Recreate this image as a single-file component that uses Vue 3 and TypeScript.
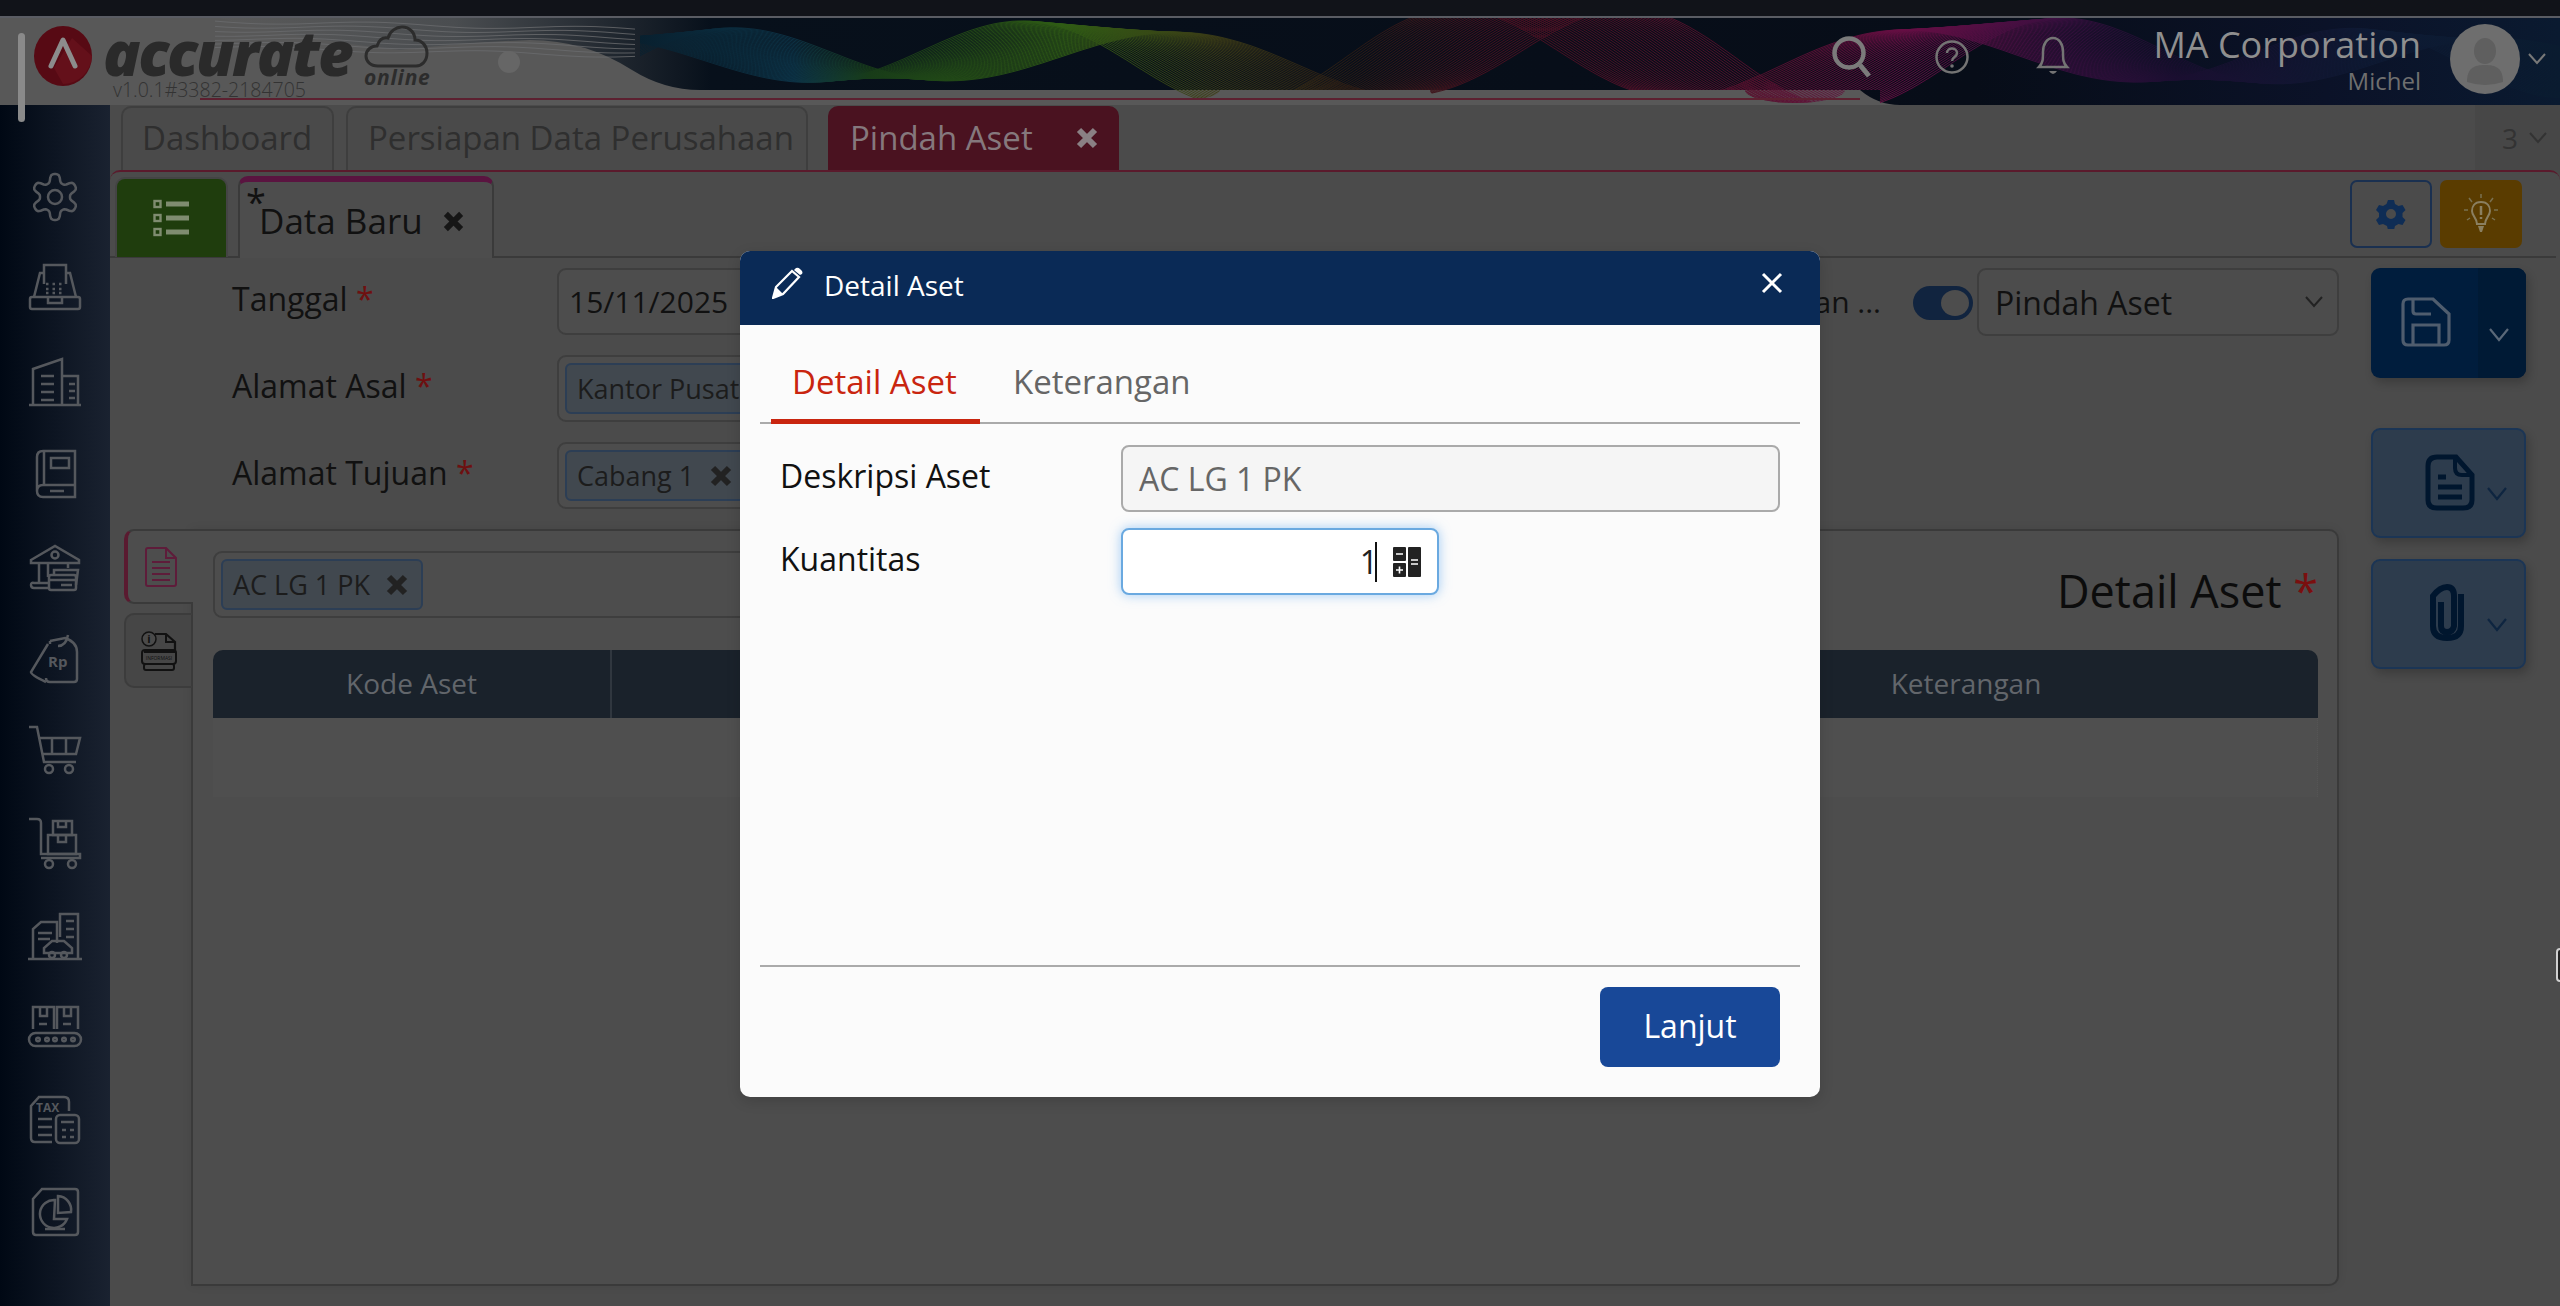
<script setup lang="ts">
import { computed } from 'vue'

const ribbonLines = computed(() => {
  const out: string[] = []
  const n = 46
  for (let i = 0; i < n; i++) {
    const t = i / (n - 1)
    let d = ''
    for (let x = 640; x <= 2560; x += 6) {
      const env = 36 + 12 * Math.sin(x / 230 + t * 2.2)
      const y = 40 + env * Math.sin((x * 2 * Math.PI) / 440 + 0.4 + t * 2.3) + 5 * Math.sin(x / 95 + t * 2.5)
      d += (d ? 'L' : 'M') + x + ' ' + y.toFixed(1)
    }
    out.push(d)
  }
  return out
})

const greyLines = computed(() => {
  const out: string[] = []
  for (let i = 0; i < 7; i++) {
    let d = ''
    for (let x = 215; x <= 640; x += 10) {
      const y = 3 + i * 4.4 + (x - 215) * 0.02 + 2 * Math.sin(x / 34 + i * 0.5)
      d += (d ? 'L' : 'M') + x + ' ' + y.toFixed(1)
    }
    out.push(d)
  }
  return out
})

const gearPath = computed(() => {
  let d = ''
  for (let a = 0; a <= 360; a += 4) {
    const th = (a * Math.PI) / 180
    const c = Math.cos(6 * (th + Math.PI / 2))
    const r = 19 + (4 * Math.tanh(1.8 * c)) / Math.tanh(1.8)
    d += (d ? 'L' : 'M') + (27 + r * Math.cos(th)).toFixed(2) + ' ' + (27 + r * Math.sin(th)).toFixed(2)
  }
  return d + 'Z'
})
</script>

<template>
  <div class="page">
    <div class="strip"></div>

    <header class="header">
      <svg class="art" viewBox="0 0 2560 87" preserveAspectRatio="none">
        <defs>
          <linearGradient id="baseG" gradientUnits="userSpaceOnUse" x1="220" y1="0" x2="2560" y2="0">
            <stop offset="0" stop-color="#5a5a5a" />
            <stop offset="0.1" stop-color="#4a4d50" />
            <stop offset="0.21" stop-color="#07101b" />
            <stop offset="0.75" stop-color="#070d18" />
            <stop offset="0.9" stop-color="#0b1228" />
            <stop offset="1" stop-color="#0a1a30" />
          </linearGradient>
          <linearGradient id="ribG" gradientUnits="userSpaceOnUse" x1="640" y1="0" x2="2560" y2="0">
            <stop offset="0" stop-color="#08202f" />
            <stop offset="0.08" stop-color="#0c3448" />
            <stop offset="0.12" stop-color="#183c18" />
            <stop offset="0.22" stop-color="#2f5c14" />
            <stop offset="0.3" stop-color="#3c3c16" />
            <stop offset="0.37" stop-color="#2c1c14" />
            <stop offset="0.44" stop-color="#4a1020" />
            <stop offset="0.58" stop-color="#58102e" />
            <stop offset="0.66" stop-color="#660e44" />
            <stop offset="0.74" stop-color="#3a0f40" />
            <stop offset="0.8" stop-color="#1a0e30" />
            <stop offset="0.9" stop-color="#0e1a34" />
            <stop offset="1" stop-color="#0a1c30" />
          </linearGradient>
          <clipPath id="ribClip">
            <rect x="640" y="0" width="1260" height="72" />
            <rect x="1880" y="0" width="680" height="87" />
            <ellipse cx="1150" cy="72" rx="70" ry="13" />
            <ellipse cx="1490" cy="72" rx="60" ry="15" />
            <ellipse cx="1795" cy="72" rx="50" ry="13" />
          </clipPath>
        </defs>
        <path fill="url(#baseG)" d="M220 0H2560V87H1900Q1878 87 1860 72H700Q664 72 632 52Q585 22 530 22Q470 24 400 32Q300 22 220 0Z" />
        <path v-for="(d, i) in greyLines" :key="'g' + i" :d="d" fill="none" stroke="#6a6c6e" stroke-width="1" opacity="0.8" />
        <g clip-path="url(#ribClip)">
          <path v-for="(d, i) in ribbonLines" :key="i" :d="d" fill="none" stroke="url(#ribG)" stroke-width="0.9" />
        </g>
        <path d="M200 81H1860" stroke="#5c2030" stroke-width="2" />
      </svg>

      <div class="scroll-thumb"></div>

      <div class="logo">
        <svg class="logo-mark" viewBox="0 0 58 60">
          <ellipse cx="29" cy="30" rx="29" ry="30" fill="#570a14" />
          <path d="M29 58a29 30 0 0 0 29-28L38 12 20 42Z" fill="#64101a" />
          <path d="M17 40 29 14 41 40" fill="none" stroke="#8c8c8c" stroke-width="5" stroke-linecap="round" stroke-linejoin="round" />
        </svg>
        <div class="logo-words">
          <span class="logo-name">accurate</span>
          <span class="logo-ver">v1.0.1#3382-2184705</span>
        </div>
        <div class="logo-cloud">
          <svg viewBox="0 0 66 44" width="66" height="44">
            <path d="M14 41C6 41 2 36 2 31 2 25 7 21 13 21 15 15 19 12 24 13 26 6 32 2 38 2 46 2 51 8 51 15 58 15 63 21 63 28 63 36 58 41 52 41Z" fill="none" stroke="#2c2c2c" stroke-width="3" />
          </svg>
          <span class="logo-online">online</span>
        </div>
        <div class="logo-dot"></div>
      </div>

      <div class="head-right">
        <svg class="hicon search" viewBox="0 0 40 44" width="40" height="44">
          <circle cx="17" cy="17" r="14.5" fill="none" stroke="#7b7b7b" stroke-width="4.5" />
          <path d="M28 29 37 40" stroke="#7b7b7b" stroke-width="5" />
        </svg>
        <svg class="hicon help" viewBox="0 0 36 36" width="36" height="36">
          <circle cx="18" cy="18" r="15.5" fill="none" stroke="#747474" stroke-width="2.5" />
          <path d="M13 14C13 8 23 8 23 14 23 18 18 18 18 22" fill="none" stroke="#747474" stroke-width="2.5" />
          <circle cx="18" cy="27" r="1.8" fill="#747474" />
        </svg>
        <svg class="hicon bell" viewBox="0 0 34 42" width="34" height="42">
          <path d="M3 32C7 28 7 24 7 17 7 9 11 3 17 3 23 3 27 9 27 17 27 24 27 28 31 32Z" fill="none" stroke="#747474" stroke-width="2.5" />
          <path d="M13 36Q17 42 21 36Z" fill="#747474" />
        </svg>
        <div class="who">
          <div class="corp">MA Corporation</div>
          <div class="user">Michel</div>
        </div>
        <svg class="avatar" viewBox="0 0 70 70" width="70" height="70">
          <circle cx="35" cy="35" r="35" fill="#6e6e6e" />
          <ellipse cx="35" cy="27" rx="11" ry="13" fill="#5f5f5f" />
          <path d="M17 58C17 44 24 41 35 41S53 44 53 58Q35 64 17 58Z" fill="#5f5f5f" />
        </svg>
        <svg class="chev head-chev" viewBox="0 0 18 12" width="18" height="12"><path d="M1 1 9 10 17 1" fill="none" stroke="#787878" stroke-width="2" /></svg>
      </div>
    </header>

    <div class="body">
      <nav class="side">
        <div class="side-item">
          <svg viewBox="0 0 54 54" width="54" height="54"><path :d="gearPath" /><circle cx="27" cy="27" r="7" /></svg>
        </div>
        <div class="side-item">
          <svg viewBox="0 0 54 54" width="54" height="54">
            <path d="M16 22V3H38V22" /><path d="M16 11H12L6 35M38 11H42L48 35" /><rect x="2" y="35" width="50" height="12" rx="2" /><path d="M20 35V41H34V35" />
            <path d="M18 22H36M18 27H36M18 31H36" stroke-dasharray="2.5 4" />
          </svg>
        </div>
        <div class="side-item">
          <svg viewBox="0 0 54 54" width="54" height="54">
            <path d="M1 50H53" /><path d="M5 50V14L34 4V50" /><path d="M34 21H50V50" /><path d="M13 21H26M13 29H26M13 37H26M13 45H26M41 29H47M41 36H47M41 43H47" />
          </svg>
        </div>
        <div class="side-item">
          <svg viewBox="0 0 54 54" width="54" height="54">
            <path d="M9 44V10Q9 4 15 4H47V50H15Q9 50 9 44T15 38H47" /><path d="M16 4V38" /><rect x="23" y="11" width="18" height="10" /><path d="M22 44H36" />
          </svg>
        </div>
        <div class="side-item">
          <svg viewBox="0 0 54 54" width="54" height="54">
            <path d="M3 21 27 7 51 21V24H3Z" /><circle cx="27" cy="16" r="3.5" /><path d="M11 24V45M20 24V38M40 24V29" /><path d="M20 49H6Q3 49 3 46T6 44H20" />
            <rect x="21" y="36" width="27" height="15" rx="2" /><path d="M26 36V31H50L48 46" /><path d="M21 41H48M33 46H44" />
          </svg>
        </div>
        <div class="side-item">
          <svg viewBox="0 0 54 54" width="54" height="54">
            <path d="M22 9 37 6Q49 10 49 20V47Q49 50 46 50H22Q18 50 18 46" /><path d="M20 12 3 40Q3 43 18 50" /><path d="M22 9V12" /><path d="M30 14Q38 14 40 3" />
            <text x="20" y="35" class="ic-text">Rp</text>
          </svg>
        </div>
        <div class="side-item">
          <svg viewBox="0 0 54 54" width="54" height="54">
            <path d="M1 3H9L16 38H48" /><path d="M11 14H52L48 30H14" /><path d="M24 14V30M38 14V30" /><circle cx="21" cy="45" r="4" /><circle cx="41" cy="45" r="4" />
          </svg>
        </div>
        <div class="side-item">
          <svg viewBox="0 0 54 54" width="54" height="54">
            <path d="M1 3H9Q13 3 13 7V38H52V42H13" /><circle cx="21" cy="48" r="4" /><circle cx="44" cy="48" r="4" />
            <rect x="20" y="19" width="28" height="19" /><rect x="25" y="5" width="19" height="14" /><path d="M30 5V11H38V5M30 19V26H38V19" />
          </svg>
        </div>
        <div class="side-item">
          <svg viewBox="0 0 54 54" width="54" height="54">
            <path d="M0 50H54" /><path d="M5 50V20L13 13H29V34" /><path d="M32 28V5H50V50" /><path d="M10 24H24M10 30H22M38 12H46M38 20H46M38 28H46" />
            <path d="M16 44V39L24 32H36L44 39V44Z" /><circle cx="24" cy="46" r="3" /><circle cx="36" cy="46" r="3" />
          </svg>
        </div>
        <div class="side-item">
          <svg viewBox="0 0 54 54" width="54" height="54">
            <path d="M5 28V6H26V28M29 28V6H50V28" /><path d="M12 6V15H19V6M36 6V15H43V6M11 23H19M35 23H43" />
            <rect x="1" y="32" width="52" height="13" rx="6.5" /><circle cx="10" cy="38.5" r="1.8" /><circle cx="19" cy="38.5" r="1.8" /><circle cx="27" cy="38.5" r="1.8" /><circle cx="36" cy="38.5" r="1.8" /><circle cx="45" cy="38.5" r="1.8" />
          </svg>
        </div>
        <div class="side-item">
          <svg viewBox="0 0 54 54" width="54" height="54">
            <path d="M24 49H7Q3 49 3 45V13L11 4H36Q41 4 41 9V18" /><path d="M10 26H24M10 34H24M10 42H24" />
            <rect x="28" y="22" width="23" height="28" rx="4" /><path d="M33 29H46M34 37H38M42 37H46M34 44H38M42 44H46" />
            <text x="8" y="19" class="ic-tax">TAX</text>
          </svg>
        </div>
        <div class="side-item">
          <svg viewBox="0 0 54 54" width="54" height="54">
            <path d="M14 4H47Q50 4 50 7V47Q50 50 47 50H8Q5 50 5 47V14Z" /><path d="M27 15A14 14 0 1 0 39 34H26Z" /><path d="M30 11A14 14 0 0 1 43 27L30 28Z" /><path d="M17 44H37" />
          </svg>
        </div>
      </nav>

      <main class="main">
        <div class="tabs">
          <div class="tab t-dash">Dashboard</div>
          <div class="tab t-data">Persiapan Data Perusahaan</div>
          <div class="tab t-active">
            <span>Pindah Aset</span>
            <svg viewBox="0 0 22 22" width="22" height="22"><path d="M3 3 19 19M19 3 3 19" stroke="#8a8084" stroke-width="6" /></svg>
          </div>
          <div class="tab-count">
            <span>3</span>
            <svg class="chev" viewBox="0 0 18 12" width="18" height="12"><path d="M1 1 9 10 17 1" fill="none" stroke="#333" stroke-width="2" /></svg>
          </div>
        </div>

        <section class="work">
          <div class="subbar">
            <div class="list-btn">
              <svg viewBox="0 0 38 38" width="38" height="38">
                <g fill="none" stroke="#7f8c70" stroke-width="2.4"><rect x="1.5" y="2" width="6" height="6" /><rect x="1.5" y="16" width="6" height="6" /><rect x="1.5" y="30" width="6" height="6" /></g>
                <g fill="#7f8c70"><rect x="13" y="2.500" width="23" height="5" /><rect x="13" y="16.500" width="23" height="5" /><rect x="13" y="30.500" width="23" height="5" /></g>
              </svg>
            </div>
            <div class="doc-tab">
              <span class="star">*</span>
              <span class="doc-title">Data Baru</span>
              <svg viewBox="0 0 22 22" width="21" height="21"><path d="M3 3 19 19M19 3 3 19" stroke="#161616" stroke-width="6" /></svg>
            </div>
            <div class="sub-right">
              <div class="gear-btn">
                <svg viewBox="0 0 30 30" width="30" height="30"><path fill="#0f2d55" fill-rule="evenodd" d="M12 1h6l1 4 3.500 2 4-1 3 5-3 3v4l3 3-3 5-4-1-3.500 2-1 4h-6l-1-4L7 25l-4 1-3-5 3-3v-4l-3-3 3-5 4 1 3.500-2ZM15 10a5 5 0 1 0 0 10 5 5 0 0 0 0-10Z" /></svg>
              </div>
              <div class="bulb-btn">
                <svg viewBox="0 0 34 40" width="34" height="40">
                  <path d="M17 8C10 8 8 13 8 17 8 22 13 24 13 30H21C21 24 26 22 26 17 26 13 24 8 17 8Z" fill="none" stroke="#8a7f60" stroke-width="2" />
                  <path d="M14 32H20L18 38H16Z" fill="#8a7f60" /><path d="M17 12V21M17 23V25" stroke="#8a7f60" stroke-width="2.500" />
                  <path d="M17 0V4M5 4 8 8M29 4 26 8M0 16H4M30 16H34M3 26 6 24M31 26 28 24" stroke="#7a7050" stroke-width="1.500" />
                </svg>
              </div>
            </div>
          </div>

          <div class="content">
            <div class="content-left">
              <div class="form">
                <div class="fields">
                  <div class="row">
                    <label class="lab">Tanggal <i>*</i></label>
                    <div class="box"><span class="date">15/11/2025</span></div>
                  </div>
                  <div class="row">
                    <label class="lab">Alamat Asal <i>*</i></label>
                    <div class="box"><span class="chip">Kantor Pusat</span></div>
                  </div>
                  <div class="row">
                    <label class="lab">Alamat Tujuan <i>*</i></label>
                    <div class="box">
                      <span class="chip">Cabang 1
                        <svg viewBox="0 0 22 22" width="22" height="22"><path d="M3 3 19 19M19 3 3 19" stroke="#222" stroke-width="6" /></svg>
                      </span>
                    </div>
                  </div>
                </div>
                <div class="form-right">
                  <span class="tog-label">Pencatatan ...</span>
                  <div class="toggle"><span class="knob"></span></div>
                  <div class="select">
                    <span>Pindah Aset</span>
                    <svg viewBox="0 0 18 12" width="18" height="12"><path d="M1 1 9 10 17 1" fill="none" stroke="#222" stroke-width="2" /></svg>
                  </div>
                </div>
              </div>

              <div class="panel-wrap">
                <div class="v-tabs">
                  <div class="v-tab on">
                    <svg viewBox="0 0 34 40" width="34" height="40">
                      <path d="M2 3Q2 1 4 1H22L32 11V37Q32 39 30 39H4Q2 39 2 37Z M22 1V11H32" fill="none" stroke="#5e1c3a" stroke-width="2" />
                      <path d="M8 15H26M8 21H26M8 27H26M8 33H26" stroke="#5e1c3a" stroke-width="2" />
                    </svg>
                  </div>
                  <div class="v-tab off">
                    <svg viewBox="0 0 36 42" width="36" height="42">
                      <path d="M14 4H25L34 12V22H3" fill="none" stroke="#111" stroke-width="2.200" /><path d="M25 4V12H34" fill="none" stroke="#111" stroke-width="2" />
                      <circle cx="8" cy="9" r="7" fill="#4a4a4a" stroke="#111" stroke-width="1.500" />
                      <text x="8" y="13" class="ic-i">i</text>
                      <rect x="1" y="20" width="34" height="14" rx="3" fill="none" stroke="#111" stroke-width="2" />
                      <text x="18" y="29.500" class="ic-info">INFORMASI</text>
                      <rect x="3" y="34" width="30" height="6" rx="2" fill="none" stroke="#111" stroke-width="2" />
                    </svg>
                  </div>
                </div>
                <div class="panel">
                  <div class="panel-top">
                    <div class="box wide">
                      <span class="chip">AC LG 1 PK
                        <svg viewBox="0 0 22 22" width="22" height="22"><path d="M3 3 19 19M19 3 3 19" stroke="#222" stroke-width="6" /></svg>
                      </span>
                    </div>
                    <div class="panel-title">Detail Aset <i>*</i></div>
                  </div>
                  <div class="tbl">
                    <div class="tbl-head">
                      <div class="th c1">Kode Aset</div>
                      <div class="th c2"></div>
                      <div class="th c3">Keterangan</div>
                    </div>
                    <div class="tbl-row"></div>
                  </div>
                </div>
              </div>
            </div>

            <aside class="actions">
              <div class="act save">
                <svg class="act-icon" viewBox="0 0 50 50" width="50" height="50">
                  <path d="M2 7Q2 2 7 2H32L48 17V43Q48 48 43 48H7Q2 48 2 43Z" fill="none" stroke="#4f5d6e" stroke-width="3.200" />
                  <path d="M12 3V14Q12 17 15 17H30" fill="none" stroke="#4f5d6e" stroke-width="3.200" />
                  <path d="M12 47V28H38V47" fill="none" stroke="#4f5d6e" stroke-width="3.200" />
                </svg>
                <div class="save-side">
                  <svg viewBox="0 0 20 14" width="20" height="14"><path d="M1 1 10 12 19 1" fill="none" stroke="#5a6878" stroke-width="2.200" /></svg>
                </div>
              </div>
              <div class="act doc first">
                <svg class="doc-icon" viewBox="0 0 50 57" width="50" height="57">
                  <path d="M12 3H31L47 21V46Q47 54 38 54H12Q3 54 3 46V12Q3 3 12 3Z" fill="none" stroke="#00162e" stroke-width="5" />
                  <path d="M30 3V14Q30 21 37 21H47" fill="none" stroke="#00162e" stroke-width="4" />
                  <path d="M13 23H21M13 33H37M13 43H37" stroke="#00162e" stroke-width="5" />
                </svg>
                <svg class="doc-chev" viewBox="0 0 20 14" width="20" height="14"><path d="M1 1 10 12 19 1" fill="none" stroke="#0e2540" stroke-width="2.200" /></svg>
              </div>
              <div class="act doc">
                <svg class="doc-icon clip" viewBox="0 0 38 60" width="38" height="60">
                  <path d="M13 20V44Q13 50 19 50T26 44V14Q26 5 19 5T5 14V44Q5 56 19 56T33 44V12" fill="none" stroke="#00162e" stroke-width="6" />
                </svg>
                <svg class="doc-chev" viewBox="0 0 20 14" width="20" height="14"><path d="M1 1 10 12 19 1" fill="none" stroke="#0e2540" stroke-width="2.200" /></svg>
              </div>
            </aside>
          </div>
        </section>
      </main>
    </div>

    <div class="edge-cursor"></div>

    <div class="modal">
      <div class="m-head">
        <svg viewBox="0 0 34 32" width="34" height="32">
          <path d="M1 31 4 20 20 4 27 10 11 27Z" fill="none" stroke="#fff" stroke-width="2.200" />
          <path d="M1 31 4 20 11 27Z" fill="#fff" /><path d="M24 1Q26 0 28 2L30 4Q31 6 30 7L28 8 22 3Z" fill="#fff" />
        </svg>
        <span class="m-title">Detail Aset</span>
        <svg class="m-close" viewBox="0 0 22 22" width="22" height="22"><path d="M2 2 20 20M20 2 2 20" stroke="#fff" stroke-width="3" /></svg>
      </div>
      <div class="m-tabs">
        <div class="m-tab on">Detail Aset</div>
        <div class="m-tab">Keterangan</div>
      </div>
      <div class="m-body">
        <div class="m-row">
          <div class="m-lab">Deskripsi Aset</div>
          <div class="m-input dis">AC LG 1 PK</div>
        </div>
        <div class="m-row">
          <div class="m-lab">Kuantitas</div>
          <div class="m-input qty">
            <span>1</span><span class="caret"></span>
            <svg viewBox="0 0 28 30" width="28" height="30">
              <rect x="0" y="0" width="13" height="14" rx="1" fill="#222" /><rect x="0" y="16" width="13" height="14" rx="1" fill="#222" /><rect x="15" y="0" width="13" height="30" rx="1" fill="#222" />
              <path d="M3 7H10M3 23H10M6.500 19.500V26.500M18 13H25M18 17H25" stroke="#fff" stroke-width="1.600" />
            </svg>
          </div>
        </div>
      </div>
      <div class="m-foot">
        <div class="m-btn">Lanjut</div>
      </div>
    </div>
  </div>
</template>

<style>
html, body { margin: 0; background: #484848; }
</style>

<style scoped>
.page { position: relative; width: 2560px; height: 1306px; overflow: hidden; background: #484848; font-family: "Open Sans", "Noto Sans", sans-serif; color: #111; }
.strip { height: 16px; background: #111319; border-bottom: 2px solid #5a5c63; }

.header { position: relative; height: 87px; background: #585858; display: flex; justify-content: space-between; }
.art { position: absolute; inset: 0; width: 2560px; height: 87px; }
.scroll-thumb { position: absolute; left: 18px; top: 15px; width: 7px; height: 89px; border-radius: 4px; background: #8a8a8a; z-index: 3; }

.logo { position: relative; display: flex; align-items: flex-start; padding: 8px 0 0 34px; }
.logo-mark { width: 58px; height: 60px; flex: none; }
.logo-words { display: flex; flex-direction: column; margin-left: 11px; width: 248px; }
.logo-name { font-size: 62px; line-height: 52px; font-weight: 800; font-style: italic; color: #2a2a2a; letter-spacing: -2.400px; }
.logo-ver { font-size: 19.500px; line-height: 20px; color: #333; margin: 2px 0 0 10px; font-weight: 300; white-space: nowrap; }
.logo-cloud { display: flex; flex-direction: column; align-items: center; margin: -1px 0 0 13px; }
.logo-online { font-size: 21px; line-height: 22px; font-weight: 700; font-style: italic; color: #2c2c2c; letter-spacing: 0.800px; margin-top: -3px; }
.logo-dot { width: 22px; height: 22px; border-radius: 50%; background: #666; margin: 25px 0 0 67px; }

.head-right { position: relative; display: flex; align-items: flex-start; padding-right: 14px; }
.hicon { flex: none; }
.search { margin-top: 18px; }
.help { margin: 21px 0 0 62px; }
.bell { margin: 17px 0 0 66px; }
.who { margin: 6px 0 0 83px; text-align: right; width: 268px; }
.corp { font-size: 36px; line-height: 42px; color: #8f8f8f; }
.user { font-size: 24px; line-height: 28px; color: #6f6f6f; margin-top: 1px; }
.avatar { margin: 6px 0 0 29px; flex: none; }
.head-chev { margin: 35px 0 0 8px; flex: none; }

.body { display: flex; height: 1201px; }
.side { width: 110px; flex: none; background: linear-gradient(90deg, #000814 0%, #1a2230 100%); padding-top: 46px; box-sizing: border-box; display: flex; flex-direction: column; }
.side-item { height: 92.300px; display: flex; align-items: center; justify-content: center; flex: none; }
.side-item svg { fill: none; stroke: #55585d; stroke-width: 2.500; overflow: visible; }
.ic-text { font: 700 15px "Open Sans", sans-serif; fill: #55585d; stroke: none; }
.ic-tax { font: 700 12px "Open Sans", sans-serif; fill: #55585d; stroke: none; }
.ic-i { font: 700 11px "Open Sans", sans-serif; fill: #111; text-anchor: middle; }
.ic-info { font: 400 5px "Open Sans", sans-serif; fill: #111; text-anchor: middle; }

.main { flex: 1; min-width: 0; display: flex; flex-direction: column; background: #484848; }
.tabs { display: flex; height: 65px; padding-left: 11px; flex: none; align-items: stretch; position: relative; background: #4b4b4b; }
.tab { box-sizing: border-box; border-radius: 10px 10px 0 0; font-size: 33px; line-height: 60px; color: #2f2f2f; white-space: nowrap; margin-top: 1px; }
.t-dash { width: 213px; margin-right: 12px; padding-left: 19px; background: #4a4a4a; border: 2px solid #3e3e3e; border-bottom: 0; }
.t-data { width: 462px; margin-right: 20px; padding-left: 20px; background: #4a4a4a; border: 2px solid #3e3e3e; border-bottom: 0; }
.t-active { width: 291px; padding: 0 21px 0 22px; background: #4a1220; color: #85787d; display: flex; justify-content: space-between; align-items: center; }
.tab-count { margin-left: auto; width: 85px; flex: none; background: #474747; display: flex; align-items: center; gap: 11px; padding: 0 0 0 27px; box-sizing: border-box; font-size: 28px; color: #333; }

.work { flex: 1; min-height: 0; display: flex; flex-direction: column; border-top: 2px solid #5a1a2c; border-radius: 10px 10px 0 0; background: #4b4b4b; }
.subbar { display: flex; height: 86px; flex: none; box-sizing: border-box; border-bottom: 2px solid #3a3a3a; margin-right: 4px; align-items: flex-end; padding-left: 5px; position: relative; }
.list-btn { width: 113px; height: 80px; box-sizing: border-box; background: #1f3d0d; border: 2px solid #444; border-bottom: 0; border-radius: 10px 10px 0 0; display: flex; align-items: center; justify-content: center; margin-bottom: -1px; }
.doc-tab { position: relative; width: 256px; height: 82px; margin: 0 0 -2px 10px; box-sizing: border-box; background: #4d4d4d; border: 2px solid #3a3a3a; border-top: 6px solid #5a1440; border-bottom: 0; border-radius: 10px 10px 0 0; display: flex; align-items: center; padding: 2px 0 0 19px; gap: 20px; }
.star { position: absolute; left: 6px; top: 8px; width: 13px; font-size: 36px; line-height: 24px; }
.doc-title { font-size: 35px; line-height: 44px; color: #111; }
.sub-right { margin-left: auto; display: flex; gap: 8px; align-self: flex-start; padding: 8px 34px 0 0; }
.gear-btn, .bulb-btn { width: 82px; height: 68px; box-sizing: border-box; border-radius: 7px; display: flex; align-items: center; justify-content: center; }
.gear-btn { border: 2px solid #1a3050; }
.bulb-btn { background: #5a3c00; }

.content { flex: 1; display: flex; padding-top: 10px; min-height: 0; }
.content-left { width: 2229px; flex: none; display: flex; flex-direction: column; }
.form { display: flex; justify-content: space-between; }
.fields { display: flex; flex-direction: column; gap: 20px; padding-left: 122px; }
.row { display: flex; align-items: center; height: 67px; }
.lab { width: 325px; font-size: 32px; color: #111; margin-top: -6px; }
.lab i { font-style: normal; color: #6e1010; }
.box { width: 650px; height: 67px; box-sizing: border-box; background: #4d4d4d; border: 2px solid #3e3e3e; border-radius: 9px; display: flex; align-items: center; padding-left: 6px; }
.date { font-size: 30px; margin-left: 4px; color: #111; }
.chip { height: 51px; box-sizing: border-box; background: #41484f; border: 2px solid #2c3e55; border-radius: 6px; display: inline-flex; align-items: center; gap: 16px; padding: 0 13px 0 10px; font-size: 27px; color: #1c1c1c; white-space: nowrap; }
.form-right { display: flex; align-items: flex-start; }
.tog-label { font-size: 30px; line-height: 68px; margin-right: 32px; }
.toggle { width: 60px; height: 34px; margin: 18px 4px 0 0; background: #11243f; border-radius: 17px; position: relative; }
.knob { position: absolute; right: 4px; top: 4px; width: 28px; height: 26px; border-radius: 50%; background: #4d4d4d; }
.select { width: 362px; height: 68px; box-sizing: border-box; border: 2px solid #3e3e3e; border-radius: 9px; background: #4c4c4c; display: flex; align-items: center; justify-content: space-between; padding: 0 14px 0 16px; font-size: 32px; }

.panel-wrap { display: flex; margin: 20px 0 0 14px; height: 757px; }
.v-tabs { width: 69px; flex: none; display: flex; flex-direction: column; gap: 9px; position: relative; z-index: 1; margin-right: -2px; }
.v-tab { height: 75px; box-sizing: border-box; display: flex; align-items: center; justify-content: center; border-radius: 10px 0 0 10px; }
.v-tab.on { background: #4d4d4d; border-left: 4px solid #5a1a30; border-top: 2px solid #3a3a3a; border-bottom: 2px solid #3a3a3a; }
.v-tab.off { background: #464646; border: 2px solid #3c3c3c; border-right: 2px solid #3a3a3a; }
.panel { flex: 1; box-sizing: border-box; background: #4d4d4d; border: 2px solid #3a3a3a; border-radius: 0 10px 10px 0; padding: 20px 19px 0 20px; box-shadow: 0 0 10px rgba(0,0,0,.08); }
.panel-top { display: flex; justify-content: space-between; align-items: flex-start; height: 67px; }
.box.wide { width: 1100px; }
.panel-title { font-size: 45px; line-height: 60px; color: #0c0c0c; margin-top: 10px; }
.panel-title i { font-style: normal; color: #7a0f0f; }
.tbl { margin-top: 32px; }
.tbl-head { display: flex; height: 68px; background: #1a222b; border-radius: 10px 10px 0 0; }
.th { box-sizing: border-box; text-align: center; font-size: 28px; line-height: 66px; color: #62666b; }
.c1 { width: 399px; border-right: 2px solid #30373f; }
.c2 { flex: 1; }
.c3 { width: 704px; }
.tbl-row { height: 79px; background: #4f4f4f; border-right: 1px dotted #555; }

.actions { width: 155px; margin-left: 32px; flex: none; display: flex; flex-direction: column; gap: 21px; }
.act { height: 110px; box-sizing: border-box; border-radius: 9px; display: flex; position: relative; box-shadow: 3px 5px 10px rgba(0,0,0,.2); }
.save { background: #001d3d; margin-bottom: 29px; overflow: hidden; }
.act-icon { position: absolute; left: 30px; top: 29px; }
.save-side { position: absolute; right: 0; top: 0; bottom: 0; width: 48px; background: #001a35; }
.save-side svg { position: absolute; left: 11px; top: 60px; }
.doc { background: #2d3c4d; border: 2px solid #1b3555; }
.doc-icon { position: absolute; left: 52px; top: 24px; }
.doc-icon.clip { left: 55px; top: 21px; }
.doc-chev { position: absolute; left: 114px; top: 57px; }

.edge-cursor { position: absolute; left: 2556px; top: 948px; width: 10px; height: 34px; box-sizing: border-box; border: 2px solid #d0d0d0; border-radius: 4px; background: #222; }

.modal { position: absolute; left: 740px; top: 251px; width: 1080px; height: 846px; background: #fbfbfb; border-radius: 10px; display: flex; flex-direction: column; overflow: hidden; box-shadow: 0 4px 14px rgba(0,0,0,.15); }
.m-head { height: 74px; flex: none; background: #0a2a56; display: flex; align-items: center; padding: 0 37px 0 32px; color: #fff; }
.m-head > svg:first-child { margin-top: -10px; }
.m-title { font-size: 28px; margin: -6px 0 0 18px; }
.m-close { margin-left: auto; margin-top: -10px; }
.m-tabs { display: flex; margin: 26px 20px 0; padding-left: 11px; height: 73px; box-sizing: border-box; border-bottom: 2px solid #aaa; }
.m-tab { padding: 0 22px; font-size: 33px; line-height: 62px; color: #666; height: 71px; box-sizing: border-box; white-space: nowrap; }
.m-tab.on { color: #c9250f; width: 209px; margin-right: 11px; border-bottom: 5px solid #c9250f; height: 73px; padding: 0 0 0 21px; }
.m-body { flex: 1; padding: 21px 40px 0; display: flex; flex-direction: column; gap: 16px; }
.m-row { display: flex; align-items: center; }
.m-lab { width: 341px; font-size: 32px; color: #111; margin-top: -6px; }
.m-input { box-sizing: border-box; height: 67px; border-radius: 8px; font-size: 32px; }
.dis { width: 659px; background: #f5f5f5; border: 2px solid #aaa; color: #666; line-height: 63px; padding-left: 16px; }
.qty { width: 318px; background: #fff; border: 2px solid #6aa9e0; box-shadow: 0 0 12px rgba(90,165,240,.55); display: flex; align-items: center; justify-content: flex-end; padding-right: 16px; color: #222; }
.caret { width: 2px; height: 40px; background: #111; margin: 0 16px 0 -3px; }
.m-foot { margin: 0 20px; height: 132px; box-sizing: border-box; border-top: 2px solid #aaa; padding: 20px 20px 0 0; flex: none; display: flex; justify-content: flex-end; }
.m-btn { width: 180px; height: 80px; background: #184898; color: #fff; border-radius: 8px; font-size: 32px; line-height: 78px; text-align: center; }
</style>
